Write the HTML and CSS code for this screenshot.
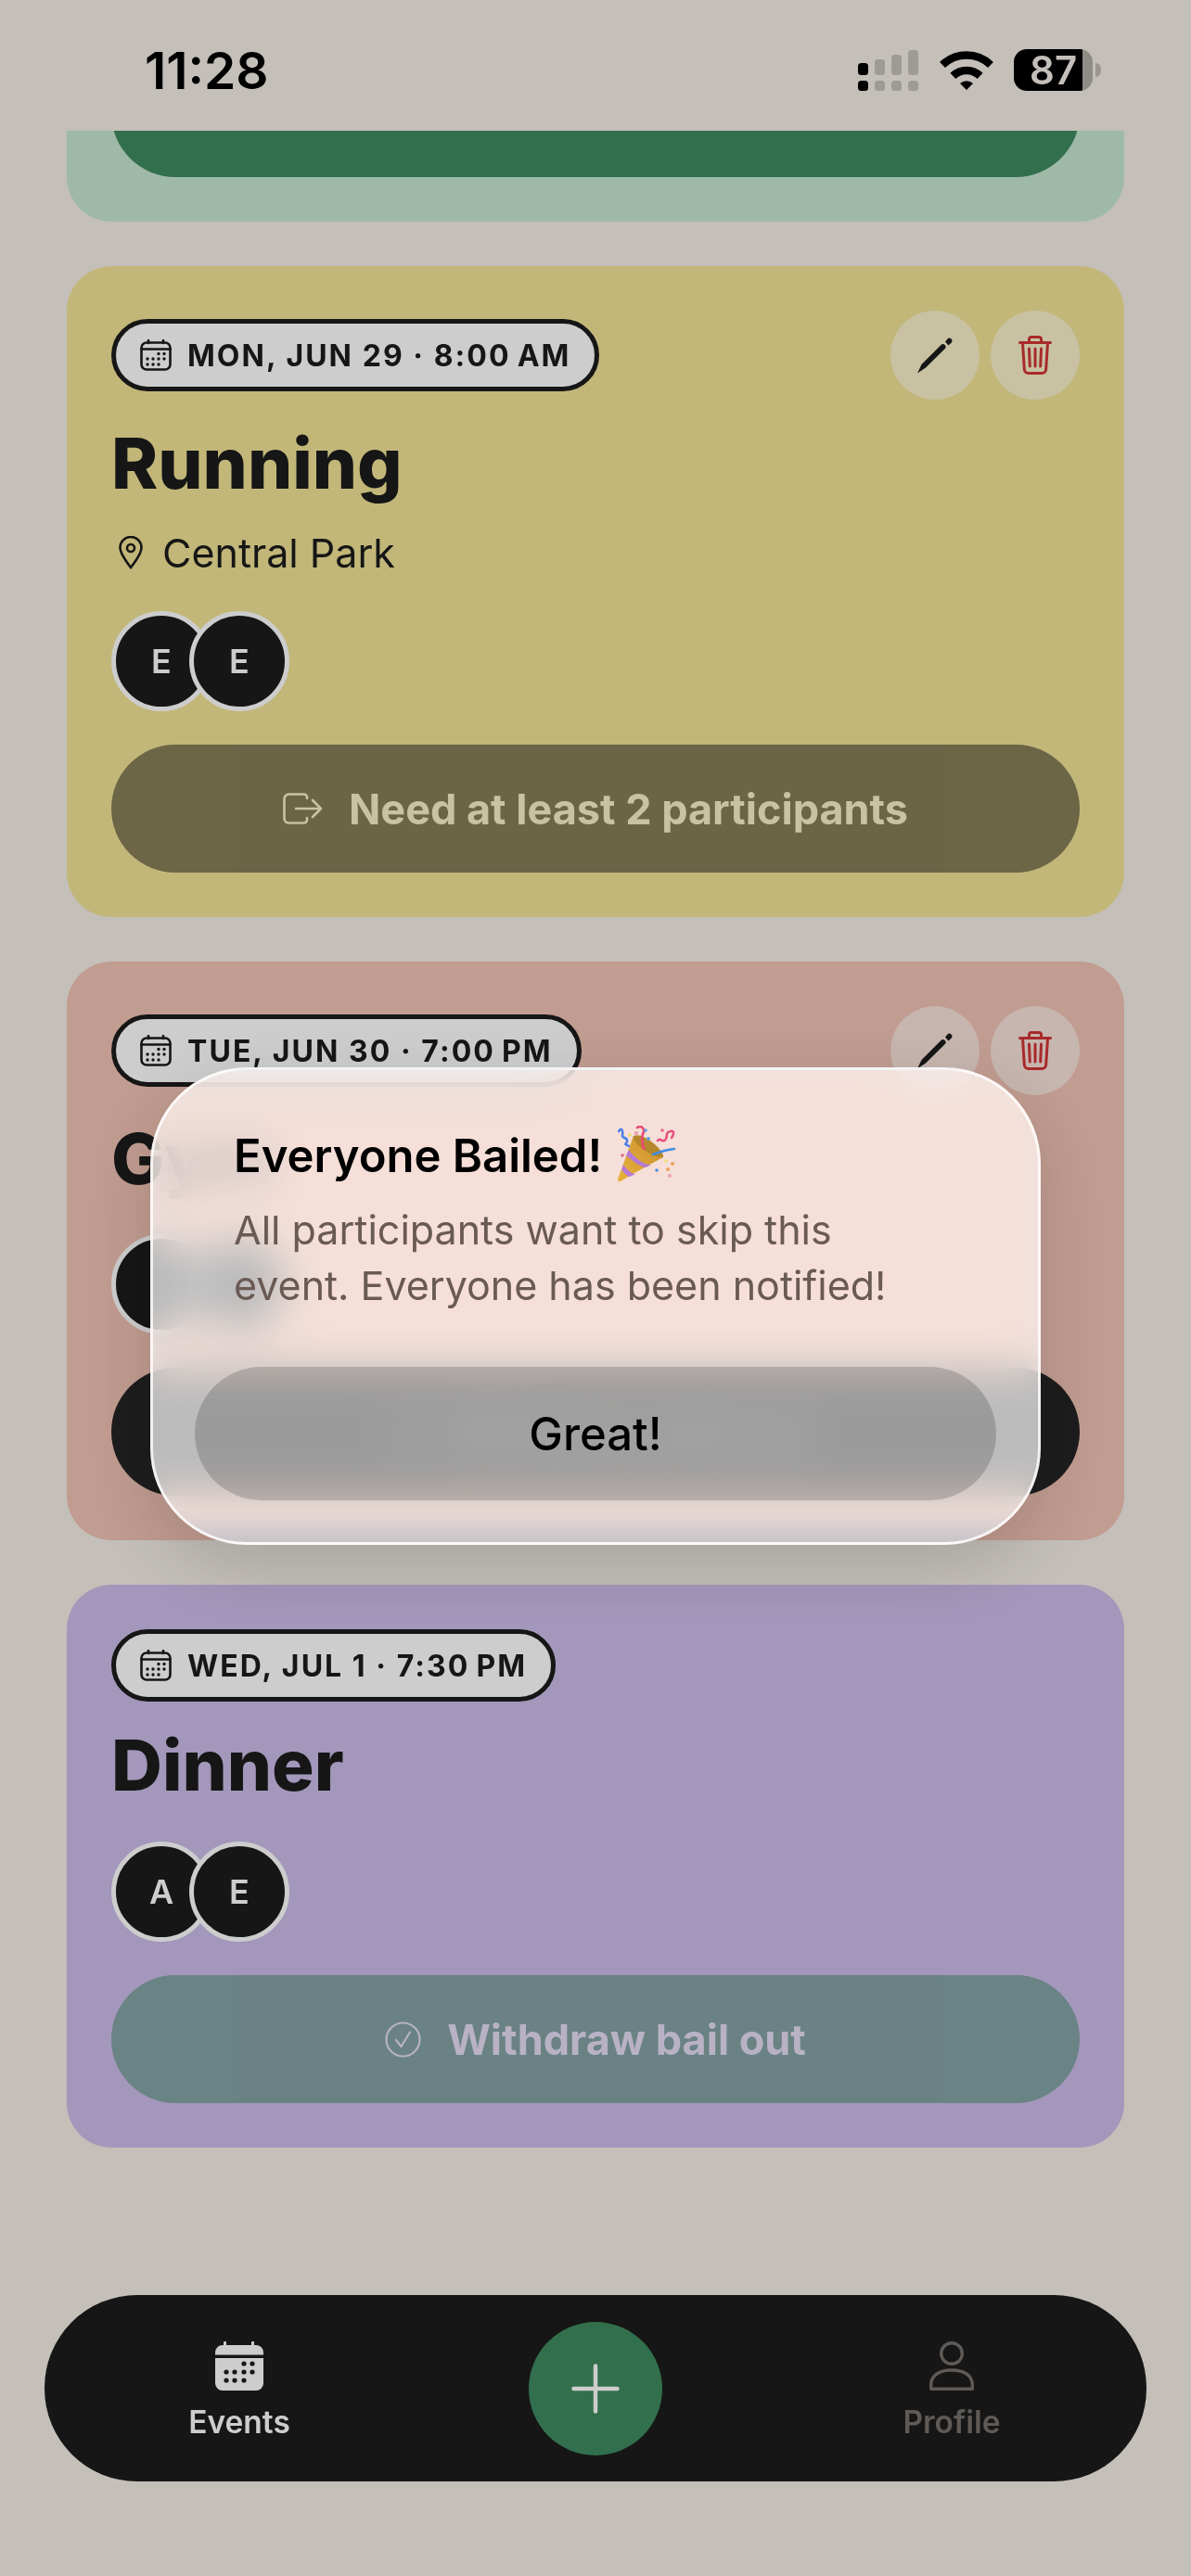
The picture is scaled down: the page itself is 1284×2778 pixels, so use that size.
FILE: index.html
```html
<!DOCTYPE html>
<html lang="en">
<head>
    <meta charset="UTF-8">
    <meta name="viewport" content="width=device-width, initial-scale=1.0">
    <title>Events</title>
    <link rel="stylesheet" href="styles.css">
</head>
<body>
    <div class="screen">
        <!-- Status bar -->
        <header class="status-bar">
            <span class="status-time">11:28</span>
            <div class="status-icons">
                <svg class="signal" width="66" height="44" viewBox="0 0 66 44">
                    <g fill="#9e9a94">
                        <rect x="18" y="10" width="11" height="17" rx="3.5"/>
                        <rect x="36" y="5" width="11" height="22" rx="3.5"/>
                        <rect x="54" y="0" width="11" height="27" rx="3.5"/>
                        <rect x="18" y="33" width="11" height="11" rx="3.5"/>
                        <rect x="36" y="33" width="11" height="11" rx="3.5"/>
                        <rect x="54" y="33" width="11" height="11" rx="3.5"/>
                    </g>
                    <rect x="0" y="14" width="11" height="13" rx="3.5"/>
                    <rect x="0" y="33" width="11" height="11" rx="3.5"/>
                </svg>
                <svg class="wifi" width="58" height="42" viewBox="0 0 58 42">
                    <path d="M3 15 A37.5 37.5 0 0 1 55 15" fill="none" stroke="#000" stroke-width="8.5"/>
                    <path d="M14.4 26.9 A21 21 0 0 1 43.6 26.9" fill="none" stroke="#000" stroke-width="8.5"/>
                    <path d="M29 42 L22 35 A10 10 0 0 1 36 35 Z"/>
                </svg>
                <div class="battery-wrap">
                    <div class="battery">87</div>
                    <span class="battery-nub"></span>
                </div>
            </div>
        </header>

        <!-- Event list, scrolled so the first card is cut off -->
        <main class="event-list">
            <section class="event-card card-green card-scrolled">
                <div class="action-btn btn-green"></div>
            </section>

            <section class="event-card card-yellow">
                <div class="card-header">
                    <div class="date-badge">
                        <svg class="cal-icon" width="34" height="34" viewBox="0 0 34 34"><use href="#calendar-line"/></svg>
                        <span>MON, JUN 29 · 8:00&#8239;AM</span>
                    </div>
                    <div class="card-tools">
                        <button class="tool-btn"><svg width="40" height="40" viewBox="0 0 40 40"><use href="#pencil"/></svg></button>
                        <button class="tool-btn"><svg width="36" height="42" viewBox="0 0 36 42"><use href="#trash"/></svg></button>
                    </div>
                </div>
                <h2 class="event-title">Running</h2>
                <div class="event-location">
                    <svg width="26" height="36" viewBox="0 0 26 36" fill="none" stroke="#161616" stroke-width="2.6">
                        <path d="M13 34 C13 34 1.5 20 1.5 12.5 A11.5 11.5 0 0 1 24.5 12.5 C24.5 20 13 34 13 34 Z"/>
                        <circle cx="13" cy="13" r="4"/>
                    </svg>
                    <span>Central Park</span>
                </div>
                <div class="avatars">
                    <span class="avatar">E</span>
                    <span class="avatar">E</span>
                </div>
                <div class="action-btn is-disabled">
                    <svg width="43" height="34" viewBox="0 0 43 34" fill="none" stroke="currentColor" stroke-width="2.6" stroke-linecap="round" stroke-linejoin="round">
                        <path d="M26 6 V5 A3.5 3.5 0 0 0 22.5 1.5 H6.5 A5 5 0 0 0 1.5 6.5 V27.5 A5 5 0 0 0 6.5 32.5 H22.5 A3.5 3.5 0 0 0 26 29 V27"/>
                        <path d="M14 17 H41 M32 8 L41 17 L32 26"/>
                    </svg>
                    <span>Need at least 2 participants</span>
                </div>
            </section>

            <section class="event-card card-pink">
                <div class="card-header">
                    <div class="date-badge">
                        <svg class="cal-icon" width="34" height="34" viewBox="0 0 34 34"><use href="#calendar-line"/></svg>
                        <span>TUE, JUN 30 · 7:00&#8239;PM</span>
                    </div>
                    <div class="card-tools">
                        <button class="tool-btn"><svg width="40" height="40" viewBox="0 0 40 40"><use href="#pencil"/></svg></button>
                        <button class="tool-btn"><svg width="36" height="42" viewBox="0 0 36 42"><use href="#trash"/></svg></button>
                    </div>
                </div>
                <h2 class="event-title">Gym</h2>
                <div class="avatars">
                    <span class="avatar"></span>
                    <span class="avatar"></span>
                </div>
                <div class="action-btn btn-dark">
                    <svg width="39" height="39" viewBox="0 0 39 39"><use href="#check-circle"/></svg>
                    <span>Withdraw bail out</span>
                </div>
            </section>

            <section class="event-card card-purple">
                <div class="card-header">
                    <div class="date-badge">
                        <svg class="cal-icon" width="34" height="34" viewBox="0 0 34 34"><use href="#calendar-line"/></svg>
                        <span>WED, JUL 1 · 7:30&#8239;PM</span>
                    </div>
                </div>
                <h2 class="event-title">Dinner</h2>
                <div class="avatars">
                    <span class="avatar">A</span>
                    <span class="avatar">E</span>
                </div>
                <div class="action-btn btn-green is-disabled">
                    <svg width="39" height="39" viewBox="0 0 39 39"><use href="#check-circle"/></svg>
                    <span>Withdraw bail out</span>
                </div>
            </section>
        </main>

        <!-- Bottom navigation -->
        <nav class="bottom-nav">
            <div class="nav-item active">
                <svg width="52" height="53" viewBox="0 0 52 53">
                    <path fill="currentColor" d="M9 0.5 a2 2 0 0 1 3 0 V4 H39 V0.5 a2 2 0 0 1 3 0 V4 H44 A8 8 0 0 1 52 12 V14.5 H0 V12 A8 8 0 0 1 8 4 H9 Z"/>
                    <path fill="currentColor" d="M0 18 H52 V45 A8 8 0 0 1 44 53 H8 A8 8 0 0 1 0 45 Z"/>
                    <g fill="#161616">
                        <circle cx="31" cy="24" r="2.6"/><circle cx="40" cy="24" r="2.6"/>
                        <circle cx="12" cy="33" r="2.6"/><circle cx="21" cy="33" r="2.6"/><circle cx="31" cy="33" r="2.6"/><circle cx="40" cy="33" r="2.6"/>
                        <circle cx="12" cy="42" r="2.6"/><circle cx="21" cy="42" r="2.6"/><circle cx="31" cy="42" r="2.6"/>
                    </g>
                </svg>
                <span>Events</span>
            </div>
            <button class="fab">
                <svg width="52" height="54" viewBox="0 0 52 54" fill="none" stroke="#cdcdcd" stroke-width="4.5" stroke-linecap="round">
                    <path d="M26 2.5 V51.5 M2.5 27 H49.5"/>
                </svg>
            </button>
            <div class="nav-item">
                <svg width="48" height="53" viewBox="0 0 48 53" fill="none" stroke="currentColor" stroke-width="3.4">
                    <circle cx="24" cy="13" r="11.3"/>
                    <path d="M1.7 51.3 V47 C1.7 37 10 31 24 31 C38 31 46.3 37 46.3 47 V51.3 Z" stroke-linejoin="round"/>
                </svg>
                <span>Profile</span>
            </div>
        </nav>

        <!-- Alert -->
        <div class="alert-box">
            <div class="alert-text">
                <h3 class="alert-title">
                    <span>Everyone Bailed!</span>
                    <svg class="popper" width="64" height="64" viewBox="14 16 64 64">
                        <defs>
                            <linearGradient id="coneFill" x1="0" y1="1" x2="1" y2="0">
                                <stop offset="0" stop-color="#e8b23c"/>
                                <stop offset="1" stop-color="#c98f2e"/>
                            </linearGradient>
                        </defs>
                        <path d="M31 27 L63 50 C52 56 30 68 17 76 C13 77 14 73 15 71 Z" fill="url(#coneFill)"/>
                        <path d="M31 27 C29 33 49 51 63 50 C65 44 42 22 31 27 Z" fill="#b5872c"/>
                        <path d="M26 42 C33 52 44 59 50 58 L44 61 C37 60 28 52 23 48 Z" fill="#b57ad8"/>
                        <path d="M20 58 C25 65 30 68 33 68 L27 71 C23 70 20 66 18 63 Z" fill="#b57ad8"/>
                        <g fill="none" stroke-width="2.6" stroke-linecap="round">
                            <path d="M15 22 C18 17 20 22 19 26 C18 30 25 28 24 33 C23 37 20 35 26 38" stroke="#4a80e8"/>
                            <path d="M35 18 C40 15 44 20 41 25 C39 30 41 36 42 41" stroke="#e84a74"/>
                            <path d="M57 32 C60 28 63 36 66 30 C68 26 65 23 71 22 C76 21 74 26 72 29" stroke="#e8507f"/>
                            <path d="M52 47 C60 44 66 42 75 41" stroke="#3f8ae8"/>
                        </g>
                        <circle cx="34" cy="24" r="2.2" fill="#e9a0b4"/>
                        <circle cx="27" cy="26" r="1.8" fill="#f0dd70"/>
                        <circle cx="44" cy="21" r="1.8" fill="#5aa0e0"/>
                        <circle cx="47" cy="30" r="2" fill="#5aa0e0"/>
                        <circle cx="62" cy="21" r="1.8" fill="#e86488"/>
                        <circle cx="19" cy="48" r="1.8" fill="#e06a80"/>
                        <circle cx="66" cy="54" r="1.8" fill="#f0dd70"/>
                        <circle cx="73" cy="57" r="2" fill="#eda060"/>
                        <circle cx="68" cy="63" r="2" fill="#eda060"/>
                        <circle cx="56" cy="64" r="1.8" fill="#4a90e0"/>
                        <circle cx="70" cy="70" r="2" fill="#e9a0b4"/>
                    </svg>
                </h3>
                <p class="alert-body">All participants want to skip this event. Everyone has been notified!</p>
            </div>
            <button class="alert-btn">Great!</button>
        </div>
    </div>

    <!-- Shared icons -->
    <svg class="icon-defs" width="0" height="0">
        <defs>
            <g id="calendar-line">
                <rect x="1.5" y="3.5" width="31" height="29" rx="5.5" fill="none" stroke="#161616" stroke-width="2.6"/>
                <path d="M1.5 10.5 H32.5 M9 1 V4 M25 1 V4" fill="none" stroke="#161616" stroke-width="2.6" stroke-linecap="round"/>
                <g fill="#161616">
                    <circle cx="20" cy="15.5" r="1.7"/><circle cx="26" cy="15.5" r="1.7"/>
                    <circle cx="8" cy="21" r="1.7"/><circle cx="14" cy="21" r="1.7"/><circle cx="20" cy="21" r="1.7"/><circle cx="26" cy="21" r="1.7"/>
                    <circle cx="8" cy="27" r="1.7"/><circle cx="14" cy="27" r="1.7"/><circle cx="20" cy="27" r="1.7"/>
                </g>
            </g>
            <g id="pencil" fill="#161616">
                <path d="M1 39.5 L5.5 30 L27 8.5 Q29 7.2 30.7 9 Q32.5 10.7 31 12.8 L10 33.5 Z"/>
                <path d="M31 5.5 L33.5 2.5 Q35.5 0.5 37.5 2.5 Q39.5 4.5 37.5 6.7 L34.5 9.5 Z"/>
            </g>
            <g id="trash" fill="none" stroke="#a82a2a" stroke-width="3" stroke-linecap="round" stroke-linejoin="round">
                <path d="M1.5 7.5 H34.5"/>
                <path d="M11.5 7 V4 A2.5 2.5 0 0 1 14 1.5 H22 A2.5 2.5 0 0 1 24.5 4 V7"/>
                <path d="M4.5 8 L6.3 36 A4.5 4.5 0 0 0 10.8 40.5 H25.2 A4.5 4.5 0 0 0 29.7 36 L31.5 8"/>
                <path d="M11.5 14 L12.3 33 M18 14 V33 M24.5 14 L23.7 33"/>
            </g>
            <g id="check-circle" fill="none" stroke="currentColor" stroke-width="2.2" stroke-linecap="round" stroke-linejoin="round">
                <circle cx="19.5" cy="19.5" r="18"/>
                <path d="M12 20 L17.5 27 L27 11.5"/>
            </g>
        </defs>
    </svg>
</body>
</html>
```

FILE: styles.css
```css
:root {
    --page-color: #c4bfb9;
    --ink: #161616;
    --chip: #cdcdcd;
    --green: #326f4d;
}

* {
    margin: 0;
    padding: 0;
    box-sizing: border-box;
    font-family: 'Inter', 'Liberation Sans', sans-serif;
}

body {
    background-color: var(--page-color);
    color: var(--ink);
}

button {
    border: none;
    color: inherit;
}

.icon-defs {
    display: block;
}

.screen {
    position: relative;
    width: 1284px;
    height: 2778px;
    display: flex;
    flex-direction: column;
    overflow: hidden;
}

/* Status bar */
.status-bar {
    height: 141px;
    flex-shrink: 0;
    display: flex;
    align-items: center;
    justify-content: space-between;
    padding: 12px 97px 0 156px;
    color: #000;
}

.status-time {
    font-size: 55px;
    font-weight: 600;
    line-height: 1;
}

.status-icons {
    display: flex;
    align-items: center;
    gap: 22px;
    margin-top: -2px;
}

.battery-wrap {
    display: flex;
    align-items: center;
    gap: 3px;
}

.battery {
    width: 85px;
    height: 45px;
    border-radius: 14px;
    background: linear-gradient(to right, #000 87%, #8f8c86 87%);
    color: var(--page-color);
    font-size: 42px;
    font-weight: 600;
    line-height: 45px;
    padding-left: 17px;
}

.battery-nub {
    width: 6px;
    height: 15px;
    background-color: #9a968f;
    border-radius: 0 8px 8px 0;
}

/* Cards */
.event-list {
    flex: 1;
    min-height: 0;
    overflow: hidden;
    display: flex;
    flex-direction: column;
    gap: 48px;
    padding: 0 72px;
}

.event-card {
    padding: 48px;
    border-radius: 48px;
    flex-shrink: 0;
}

.card-green { background-color: #9fb9a8; }
.card-yellow { background-color: #c2b779; }
.card-pink { background-color: #c19c90; }
.card-purple { background-color: #a397bb; }

.card-scrolled {
    margin-top: -188px;
    padding-top: 100px;
}

.card-header {
    display: flex;
    align-items: center;
    justify-content: space-between;
}

.date-badge {
    height: 78px;
    display: flex;
    align-items: center;
    gap: 17px;
    padding: 0 26px;
    border: 5px solid var(--ink);
    border-radius: 39px;
    background-color: var(--chip);
    font-size: 32px;
    font-weight: 700;
    letter-spacing: 2.05px;
}

.card-tools {
    display: flex;
    gap: 12px;
}

.tool-btn {
    width: 96px;
    height: 96px;
    border-radius: 50%;
    background-color: rgba(205, 205, 205, 0.5);
    display: flex;
    align-items: center;
    justify-content: center;
}

.event-title {
    margin-top: 24px;
    font-size: 76px;
    line-height: 88px;
    font-weight: 800;
}

.event-location {
    margin-top: 27px;
    display: flex;
    align-items: center;
    gap: 21px;
    padding-left: 8px;
    font-size: 43px;
    line-height: 52px;
}

.avatars {
    margin-top: 39px;
    display: flex;
}

.event-location + .avatars {
    margin-top: 37px;
}

.card-pink .avatars {
    margin-top: 38px;
}

.avatar {
    width: 108px;
    height: 108px;
    border-radius: 50%;
    border: 5px solid var(--chip);
    background-color: var(--ink);
    color: var(--chip);
    font-size: 36px;
    font-weight: 600;
    display: flex;
    align-items: center;
    justify-content: center;
}

.avatar + .avatar {
    margin-left: -24px;
}

.action-btn {
    margin-top: 36px;
    height: 138px;
    border-radius: 69px;
    background-color: var(--ink);
    color: var(--chip);
    display: flex;
    align-items: center;
    justify-content: center;
    gap: 28px;
    font-size: 45px;
    font-weight: 700;
}

.btn-green { background-color: var(--green); }

.btn-dark {
    background-color: #1d1d1d;
    color: #8a8a8a;
}

.is-disabled {
    opacity: 0.5;
}

.card-scrolled .action-btn {
    margin-top: 0;
}

/* Bottom navigation */
.bottom-nav {
    flex-shrink: 0;
    height: 201px;
    margin: 0 48px 102px;
    border-radius: 100px;
    background-color: var(--ink);
    display: flex;
    align-items: center;
    justify-content: space-between;
}

.nav-item {
    width: 420px;
    padding-top: 6px;
    display: flex;
    flex-direction: column;
    align-items: center;
    gap: 14px;
    color: #5f5a56;
    font-size: 33.5px;
    line-height: 40px;
    font-weight: 600;
}

.nav-item.active {
    color: var(--chip);
}

.fab {
    width: 144px;
    height: 144px;
    border-radius: 50%;
    background-color: var(--green);
    display: flex;
    align-items: center;
    justify-content: center;
}

/* Alert */
.alert-box {
    position: absolute;
    top: 1151px;
    left: 162px;
    width: 960px;
    height: 515px;
    padding: 0 45px 45px;
    border: 3px solid rgba(255, 255, 255, 0.8);
    border-radius: 104px;
    background-color: rgba(255, 255, 255, 0.7);
    background-image: linear-gradient(to top, rgba(190, 190, 196, 0.85), rgba(190, 190, 196, 0) 36px);
    -webkit-backdrop-filter: blur(24px) saturate(2);
    backdrop-filter: blur(24px) saturate(2);
    box-shadow: 0 24px 70px rgba(0, 0, 0, 0.14);
    display: flex;
    flex-direction: column;
    justify-content: space-between;
}

.alert-text {
    padding: 60px 42px 0;
}

.alert-title {
    display: flex;
    align-items: center;
    gap: 17px;
    height: 64px;
    color: #000;
    font-size: 49px;
    font-weight: 600;
}

.alert-body {
    margin-top: 18px;
    color: #6a5a54;
    font-size: 43px;
    line-height: 60px;
}

.alert-btn {
    height: 144px;
    border-radius: 72px;
    background-color: rgba(0, 0, 0, 0.17);
    color: #000;
    font-size: 49px;
    font-weight: 500;
}
```
